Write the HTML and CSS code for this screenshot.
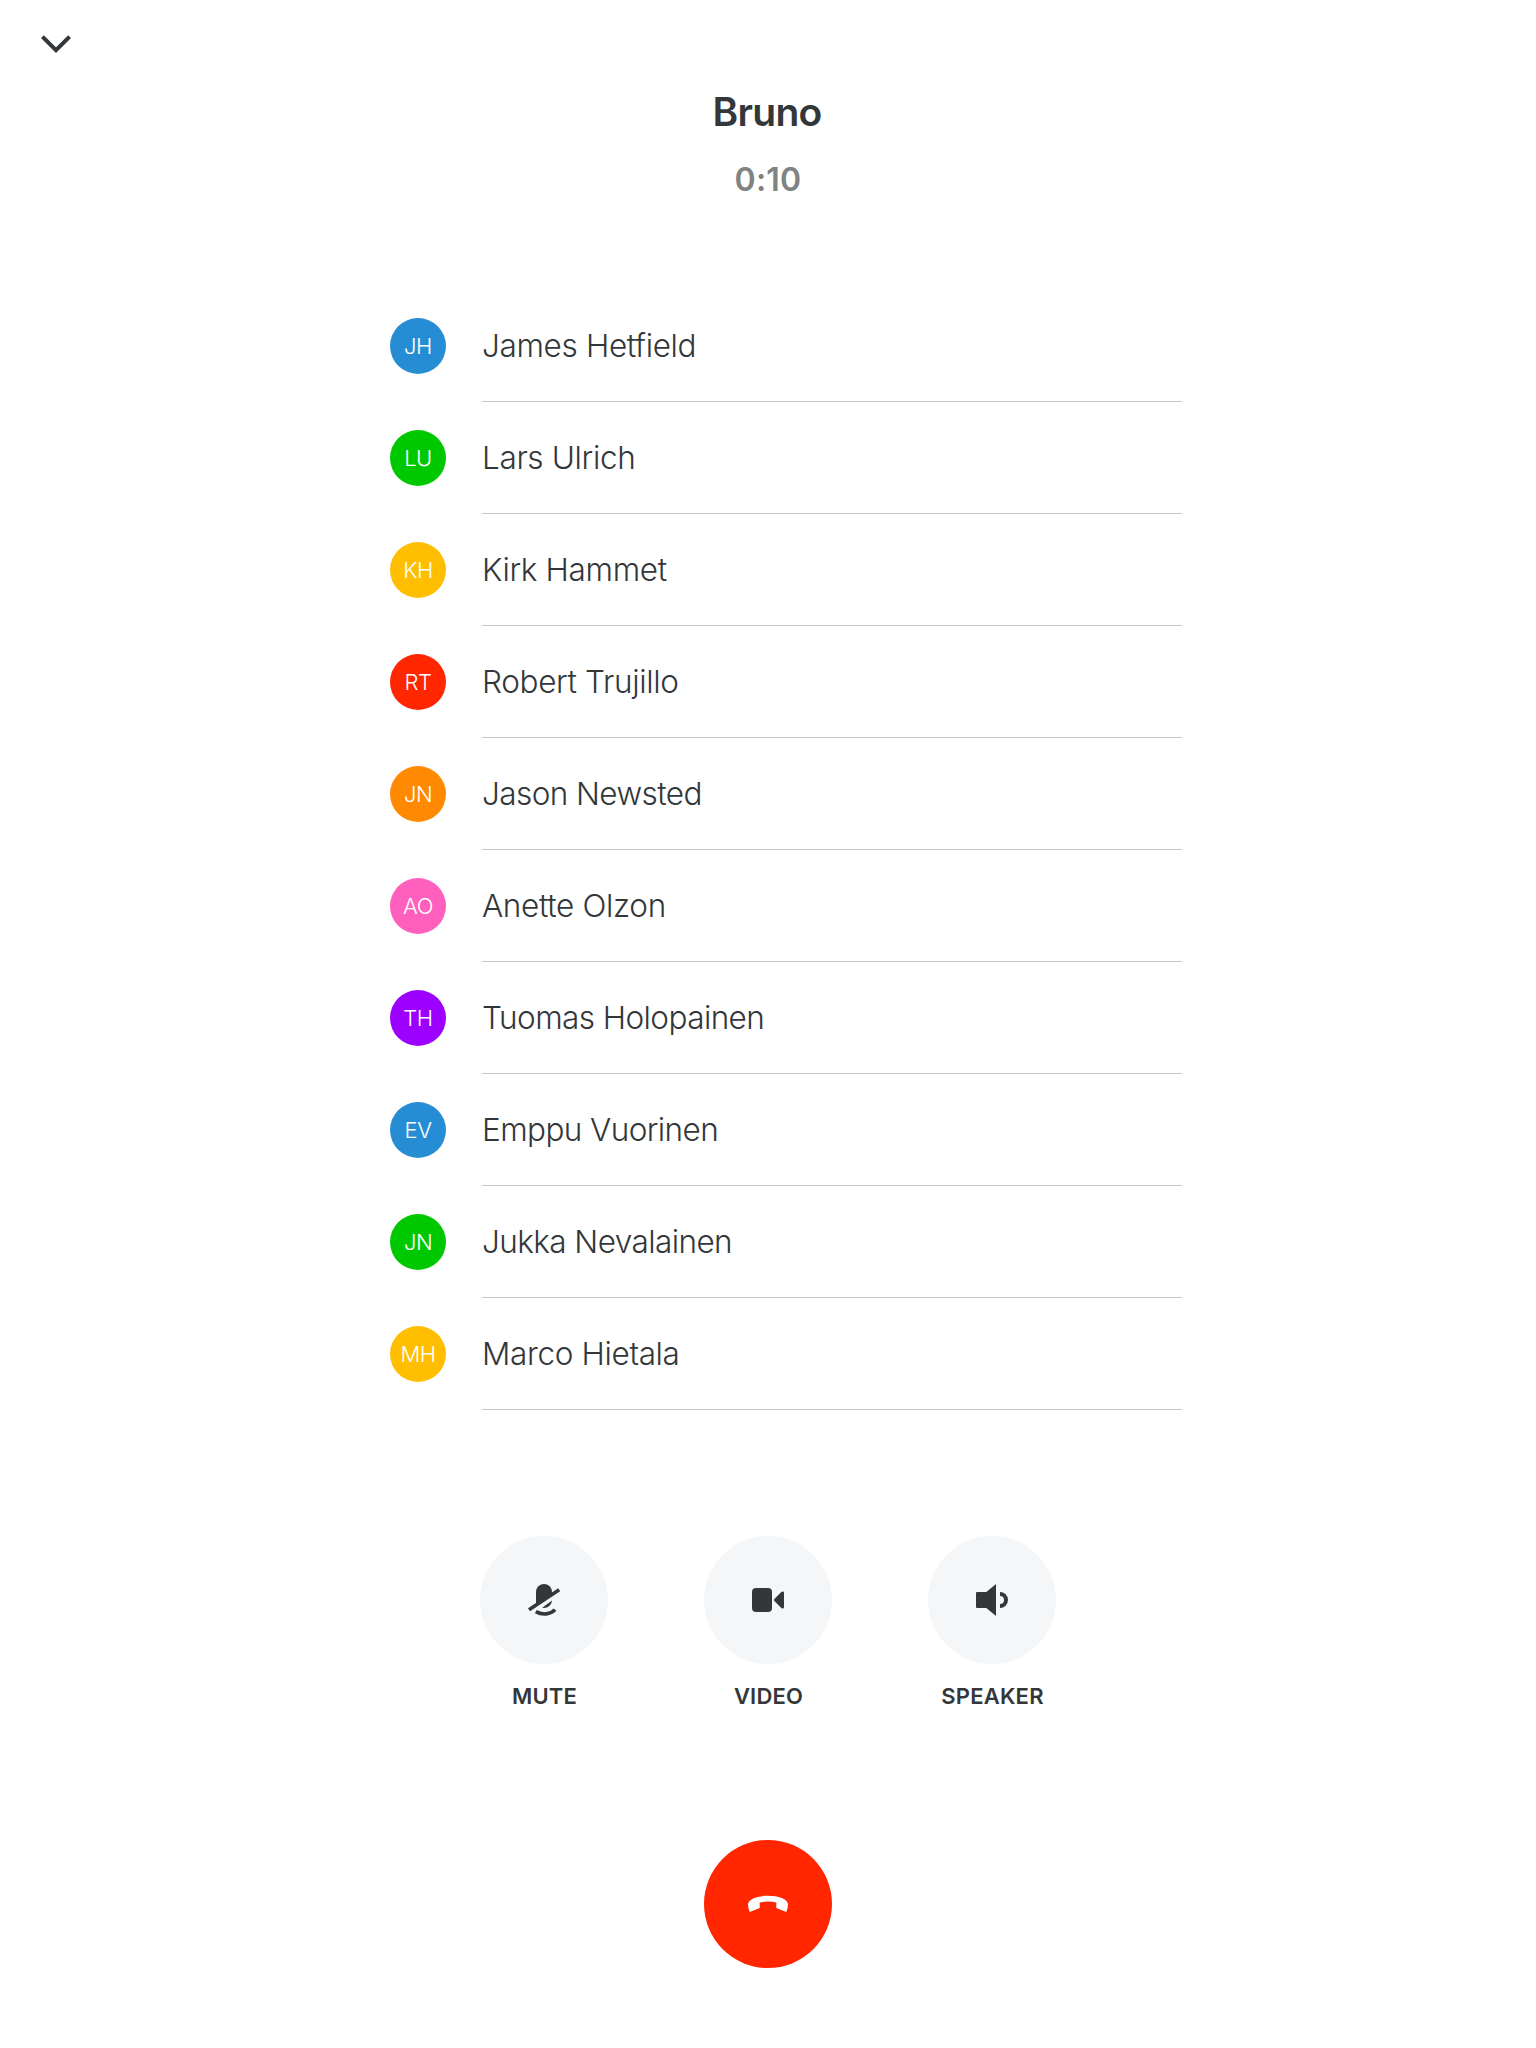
FILE: index.html
```html
<!DOCTYPE html>
<html lang="en">
<head>
<meta charset="utf-8">
<title>Bruno – Call</title>
<link rel="stylesheet" href="styles.css">
</head>
<body>
<main class="call">
  <nav class="topbar">
    <svg class="chevron" viewBox="0 0 32 20" aria-label="Minimize"><path d="M2.4 2.6 16 16.2 29.6 2.6"/></svg>
  </nav>
  <header class="heading">
    <h1 class="title">Bruno</h1>
    <p class="timer">0:10</p>
  </header>
  <ul class="people">
    <li class="person"><span class="avatar blue">JH</span><span class="name">James Hetfield</span></li>
    <li class="person"><span class="avatar green">LU</span><span class="name">Lars Ulrich</span></li>
    <li class="person"><span class="avatar yellow">KH</span><span class="name">Kirk Hammet</span></li>
    <li class="person"><span class="avatar red">RT</span><span class="name">Robert Trujillo</span></li>
    <li class="person"><span class="avatar orange">JN</span><span class="name tight">Jason Newsted</span></li>
    <li class="person"><span class="avatar pink">AO</span><span class="name">Anette Olzon</span></li>
    <li class="person"><span class="avatar violet">TH</span><span class="name tight">Tuomas Holopainen</span></li>
    <li class="person"><span class="avatar blue">EV</span><span class="name tight">Emppu Vuorinen</span></li>
    <li class="person"><span class="avatar green">JN</span><span class="name tight">Jukka Nevalainen</span></li>
    <li class="person"><span class="avatar yellow">MH</span><span class="name">Marco Hietala</span></li>
  </ul>
  <div class="controls">
    <div class="control">
      <svg class="round" viewBox="0 0 128 128">
        <path d="M56 68V56a8 8 0 0 1 16 0v2Z"/>
        <path d="M62.2 71.8 72 64.4C71.4 69 67.6 72.6 62.2 71.8Z"/>
        <path class="line" d="M49 73.8 79.2 53.8M55.8 75.6C62.4 79.4 70.6 78.5 75 73.6"/>
      </svg>
      <span class="label">MUTE</span>
    </div>
    <div class="control">
      <svg class="round" viewBox="0 0 128 128">
        <rect x="48" y="52" width="20" height="24" rx="4"/>
        <path d="M70.4 63 77.3 56.1Q78 55.6 79 55.6 80 55.6 80 56.7V71.3Q80 72.4 79 72.4 78 72.4 77.3 71.9L70.4 65Q69.5 64 70.4 63Z"/>
      </svg>
      <span class="label">VIDEO</span>
    </div>
    <div class="control">
      <svg class="round" viewBox="0 0 128 128">
        <path d="M49 56H58.3L68 48V80L58.3 72H49Q48 72 48 71V57Q48 56 49 56Z"/>
        <path class="line arc" d="M72 58A6 6 0 0 1 72 70"/>
      </svg>
      <span class="label">SPEAKER</span>
    </div>
  </div>
  <svg class="round hangup" viewBox="0 0 128 128" aria-label="End call">
    <path d="M64 55.7C74 55.7 84 59 84 64.5Q84 68.5 82.3 72L72.3 68V62.6Q68.5 61.4 64 61.4T55.7 62.6V68L45.7 72Q44 68.5 44 64.5C44 59 54 55.7 64 55.7Z"/>
  </svg>
</main>
</body>
</html>
```
FILE: styles.css
```css
* { box-sizing: border-box; margin: 0; padding: 0; }
body { background: #fff; color: #33373a; font-family: Inter, "Liberation Sans", sans-serif; }
.call { width: 1536px; height: 2048px; display: flex; flex-direction: column; align-items: center; }
.topbar { align-self: stretch; height: 88px; padding: 34px 40px 0; }
.chevron { display: block; width: 32px; height: 20px; fill: none; stroke: #33373a; stroke-width: 4; }
.heading { height: 202px; text-align: center; }
.title { padding-right: 2px; font-size: 39px; line-height: 48px; font-weight: 600; letter-spacing: -0.7px; }
.timer { margin-top: 24px; font-size: 32px; line-height: 40px; font-weight: 600; color: #818282; letter-spacing: 0.2px; }
.people { width: 792px; margin-left: 36px; list-style: none; }
.person { height: 112px; display: flex; align-items: center; gap: 36px; }
.avatar { width: 56px; height: 56px; border-radius: 50%; color: #fff; font-size: 22px; line-height: 56px; font-weight: 300; letter-spacing: -0.5px; text-align: center; }
.name { flex: 1; height: 112px; border-bottom: 1px solid #c8c8c8; font-size: 31.5px; line-height: 112px; font-weight: 300; letter-spacing: -0.35px; }
.tight { letter-spacing: -0.58px; }
.blue { background: #268dd4; }
.green { background: #00c800; }
.yellow { background: #ffbf00; }
.red { background: #ff2600; }
.orange { background: #ff8900; }
.pink { background: #ff5fbd; }
.violet { background: #9c00ff; }
.controls { display: flex; gap: 96px; margin-top: 126px; }
.control { width: 128px; display: flex; flex-direction: column; align-items: center; }
.round { flex: none; width: 128px; height: 128px; border-radius: 50%; background: #f5f6f8; fill: #33373a; }
.line { fill: none; stroke: #33373a; stroke-width: 3.6; }
.arc { stroke-width: 4; }
.label { margin-top: 17px; padding-left: 1px; font-size: 22px; line-height: 30px; font-weight: 600; letter-spacing: 0.2px; }
.hangup { margin-top: 129px; background: #ff2600; fill: #fff; }
```
